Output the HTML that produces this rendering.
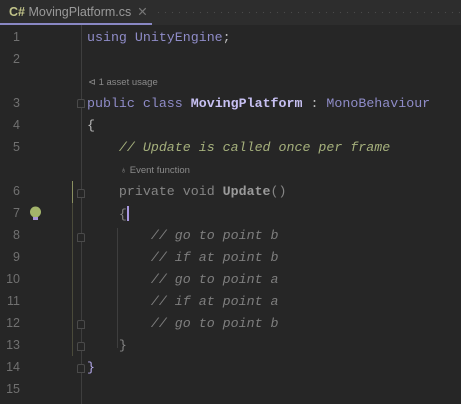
<!DOCTYPE html>
<html><head><meta charset="utf-8"><style>
body{margin:0;width:461px;height:404px;background:#262626;overflow:hidden;position:relative;font-family:"Liberation Mono",monospace;}
.tabbar{position:absolute;left:0;top:0;width:461px;height:25px;background:#2d2d2d;}
.dots{position:absolute;left:155px;top:9px;width:306px;height:10px;background-image:radial-gradient(#4a4a4a 0.6px,transparent 0.8px);background-size:7px 7px;}
.tab{position:absolute;left:0;top:0;width:152px;height:25px;font-family:"Liberation Sans",sans-serif;font-size:12.5px;color:#9a9a9a;line-height:25px;}
.tab b{color:#c2c48a;margin-left:9px;}
.tab .x{color:#777;margin-left:6px;}
.ul{position:absolute;left:0;top:23px;width:152px;height:2px;background:#8988c4;}
.ln{position:absolute;left:0;width:20px;text-align:right;color:#707070;font-size:12.5px;font-family:"Liberation Sans",sans-serif;}
.c{position:absolute;left:87px;font-size:13.3px;white-space:pre;color:#bbb;}
.hint{position:absolute;font-family:"Liberation Sans",sans-serif;font-size:9.5px;color:#8a8a8a;}
.kw{color:#8f8cc8}.cls{color:#c7c0f2;font-weight:bold}.cm{color:#a5b07c;font-style:italic}.gc{color:#7e7e7e;font-style:italic}.dim{color:#858585}
.vl{position:absolute;width:1px;background:#3e3e3e;}
.fold{position:absolute;left:77px;width:8px;height:9px;border:1px solid #4a4a4a;border-radius:2px 2px 0 0;background:#262626;box-sizing:border-box;}
</style></head><body>
<div class="tabbar"><div class="dots"></div></div>
<div class="tab"><b>C#</b> MovingPlatform.cs<span class="x">✕</span></div>
<div class="ul"></div>
<div class="vl" style="left:81px;top:25px;height:379px"></div>
<div class="vl" style="left:72px;top:181px;height:175px;background:#4a4a3a"></div>
<div class="vl" style="left:72px;top:181px;height:22px;background:#8a9060"></div>
<div class="vl" style="left:117px;top:228px;height:120px"></div>
<div class="fold" style="top:99px"></div>
<div class="fold" style="top:189px"></div>
<div class="fold" style="top:233px"></div>
<div class="fold" style="top:320px"></div>
<div class="fold" style="top:342px"></div>
<div class="fold" style="top:364px"></div>
<svg style="position:absolute;left:29px;top:206px" width="13" height="16"><circle cx="6.5" cy="6" r="5.5" fill="#a3b46b"/><rect x="4" y="11" width="5" height="3" fill="#a694d6"/></svg>
<div class="ln" style="top:30px">1</div>
<div class="ln" style="top:52px">2</div>
<div class="ln" style="top:96px">3</div>
<div class="ln" style="top:118px">4</div>
<div class="ln" style="top:140px">5</div>
<div class="ln" style="top:184px">6</div>
<div class="ln" style="top:206px">7</div>
<div class="ln" style="top:228px">8</div>
<div class="ln" style="top:250px">9</div>
<div class="ln" style="top:272px">10</div>
<div class="ln" style="top:294px">11</div>
<div class="ln" style="top:316px">12</div>
<div class="ln" style="top:338px">13</div>
<div class="ln" style="top:360px">14</div>
<div class="ln" style="top:382px">15</div>
<div class="c" style="top:30px"><span class="kw">using</span> <span class="kw">UnityEngine</span>;</div>
<div class="hint" style="left:88px;top:77px">⊲ 1 asset usage</div>
<div class="c" style="top:96px"><span class="kw">public class</span> <span class="cls">MovingPlatform</span> : <span class="kw">MonoBehaviour</span></div>
<div class="c" style="top:118px">{</div>
<div class="c" style="top:140px">    <span class="cm">// Update is called once per frame</span></div>
<div class="hint" style="left:120px;top:165px">♁ Event function</div>
<div class="c dim" style="top:184px">    private void <b style="color:#9a9a9a">Update</b>()</div>
<div class="c dim" style="top:206px">    {<span style="display:inline-block;width:2px;height:15px;background:#a898e0;vertical-align:-3px"></span></div>
<div class="c gc" style="top:228px">        // go to point b</div>
<div class="c gc" style="top:250px">        // if at point b</div>
<div class="c gc" style="top:272px">        // go to point a</div>
<div class="c gc" style="top:294px">        // if at point a</div>
<div class="c gc" style="top:316px">        // go to point b</div>
<div class="c dim" style="top:338px">    }</div>
<div class="c" style="top:360px;color:#b3a8e8">}</div>
</body></html>
